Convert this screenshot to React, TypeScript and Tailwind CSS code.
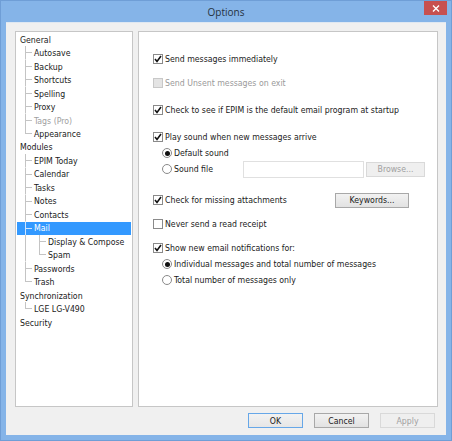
import React from "react";

type Row = { label: string; level: 0 | 1 | 2; last?: boolean; disabled?: boolean; selected?: boolean };

const rows: Row[] = [
  { label: "General", level: 0 },
  { label: "Autosave", level: 1 },
  { label: "Backup", level: 1 },
  { label: "Shortcuts", level: 1 },
  { label: "Spelling", level: 1 },
  { label: "Proxy", level: 1 },
  { label: "Tags (Pro)", level: 1, disabled: true },
  { label: "Appearance", level: 1, last: true },
  { label: "Modules", level: 0 },
  { label: "EPIM Today", level: 1 },
  { label: "Calendar", level: 1 },
  { label: "Tasks", level: 1 },
  { label: "Notes", level: 1 },
  { label: "Contacts", level: 1 },
  { label: "Mail", level: 1, selected: true },
  { label: "Display & Compose", level: 2 },
  { label: "Spam", level: 2, last: true },
  { label: "Passwords", level: 1 },
  { label: "Trash", level: 1, last: true },
  { label: "Synchronization", level: 0 },
  { label: "LGE LG-V490", level: 1, last: true },
  { label: "Security", level: 0 },
];

function Guide({ row }: { row: Row }) {
  if (row.level === 0) return <span className="w-[2px] shrink-0" />;
  const c = row.selected ? "#cfe6ff" : "#c4c4c4";
  const w = row.level === 1 ? 16 : 30;
  return (
    <svg width={w} height={13.5} className="shrink-0 block" viewBox={`0 0 ${w} 13.5`}>
      {row.level === 1 ? (
        <>
          <path d={`M7.5 0V${row.last ? 7 : 13.5}`} stroke={c} fill="none" />
          <path d="M8 6.5H14" stroke={c} fill="none" />
        </>
      ) : (
        <>
          <path d="M7.5 0V13.5" stroke="#c4c4c4" fill="none" />
          <path d={`M21.5 0V${row.last ? 7 : 13.5}`} stroke={c} fill="none" />
          <path d="M22 6.5H28" stroke={c} fill="none" />
        </>
      )}
    </svg>
  );
}

function Check({ checked = false, disabled = false }: { checked?: boolean; disabled?: boolean }) {
  return (
    <span
      className={`w-[8px] h-[8px] box-content shrink-0 border flex items-center justify-center ${
        disabled ? "border-[#c8c8c8] bg-[#e4e4e4]" : "border-[#8a8a8a] bg-white"
      }`}
    >
      {checked && (
        <svg width="8" height="8" viewBox="0 0 8 8" className="block">
          <path d="M1 4L3 6.4L7 1" stroke="#111" strokeWidth="1.6" fill="none" />
        </svg>
      )}
    </span>
  );
}

function Radio({ checked = false }: { checked?: boolean }) {
  return (
    <span className="w-[8px] h-[8px] box-content shrink-0 rounded-full border border-[#8a8a8a] bg-white flex items-center justify-center">
      {checked && <span className="w-[5px] h-[5px] rounded-full bg-[#111]" />}
    </span>
  );
}

function CheckRow({ label, checked, disabled, className = "" }: { label: string; checked?: boolean; disabled?: boolean; className?: string }) {
  return (
    <div className={`flex items-center gap-[2px] h-[12px] ${disabled ? "text-[#9a9a9a]" : "text-[#1a1a1a]"} ${className}`}>
      <Check checked={checked} disabled={disabled} />
      <span className="whitespace-nowrap">{label}</span>
    </div>
  );
}

function RadioRow({ label, checked, className = "" }: { label: string; checked?: boolean; className?: string }) {
  return (
    <div className={`flex items-center gap-[2px] h-[12px] ml-[9px] text-[#1a1a1a] ${className}`}>
      <Radio checked={checked} />
      <span className="whitespace-nowrap">{label}</span>
    </div>
  );
}

function Btn({ label, variant = "normal", className = "" }: { label: string; variant?: "normal" | "default" | "disabled"; className?: string }) {
  const v =
    variant === "default"
      ? "border-[#66a7e8] text-[#1a1a1a] bg-[linear-gradient(#f2f2f2,#e6e6e6)]"
      : variant === "disabled"
        ? "border-[#d9d9d9] text-[#a0a0a0] bg-[#efefef]"
        : "border-[#a8a8a8] text-[#1a1a1a] bg-[linear-gradient(#f2f2f2,#e2e2e2)]";
  return <div className={`flex items-center justify-center border h-[15px] shrink-0 ${v} ${className}`}>{label}</div>;
}

export default function App() {
  return (
    <div className="w-[452px] h-[441px] flex flex-col bg-[#85b4e8] border border-[#6f9ed6] text-[8.7px] leading-[12px] font-['DejaVu_Sans',sans-serif] font-stretch-condensed overflow-hidden">
      <div className="h-[21px] shrink-0 flex justify-center items-center relative text-[#26323e]">
        <span className="font-['Open_Sans',sans-serif] text-[10px] font-stretch-normal">Options</span>
        <div className="absolute right-[4px] top-0 w-[23px] h-[14px] bg-[#c75050] flex items-center justify-center">
          <svg width="8" height="7" viewBox="0 0 8 7"><path d="M1 .5L7 6.5M7 .5L1 6.5" stroke="#fff" strokeWidth="1.4" fill="none" /></svg>
        </div>
      </div>
      <div className="flex-1 mx-[5px] mb-[5px] bg-[#f0f0f0] flex flex-col pt-[8px] pl-[9px] pr-[8px] border-t border-[#dfe8f2]">
        <div className="flex gap-[5px] h-[376px]">
          <div className="w-[118px] bg-white border border-[#c6c6c6] pt-[1px] px-[1px] flex flex-col">
            {rows.map((r) => (
              <div
                key={r.label}
                className={`h-[13.48px] flex items-center pl-[1px] whitespace-nowrap ${
                  r.selected ? "bg-[#3399ff] text-white" : r.disabled ? "text-[#a0a0a0]" : "text-[#1a1a1a]"
                }`}
              >
                <Guide row={r} />
                <span>{r.label}</span>
              </div>
            ))}
          </div>
          <div className="flex-1 bg-white border border-[#c6c6c6] pl-[14px] pt-[21px] flex flex-col">
            <CheckRow label="Send messages immediately" checked />
            <CheckRow label="Send Unsent messages on exit" disabled className="mt-[12px]" />
            <CheckRow label="Check to see if EPIM is the default email program at startup" checked className="mt-[15px]" />
            <CheckRow label="Play sound when new messages arrive" checked className="mt-[15px]" />
            <RadioRow label="Default sound" checked className="mt-[4px]" />
            <div className="flex items-center mt-[4px] h-[12px]">
              <RadioRow label="Sound file" className="w-[81px]" />
              <div className="w-[121px] h-[17px] shrink-0 border border-[#e0e0e0] bg-white" />
              <Btn label="Browse..." variant="disabled" className="w-[59px] ml-[2px]" />
            </div>
            <div className="flex items-center mt-[19px] h-[12px]">
              <CheckRow label="Check for missing attachments" className="w-[182px]" checked />
              <Btn label="Keywords..." className="w-[74px]" />
            </div>
            <CheckRow label="Never send a read receipt" className="mt-[12px]" />
            <CheckRow label="Show new email notifications for:" checked className="mt-[12px]" />
            <RadioRow label="Individual messages and total number of messages" checked className="mt-[4px]" />
            <RadioRow label="Total number of messages only" className="mt-[4px]" />
          </div>
        </div>
        <div className="flex justify-end gap-[11px] mt-[6px] pr-[3px]">
          <Btn label="OK" variant="default" className="w-[55px]" />
          <Btn label="Cancel" className="w-[55px]" />
          <Btn label="Apply" variant="disabled" className="w-[55px]" />
        </div>
      </div>
    </div>
  );
}
